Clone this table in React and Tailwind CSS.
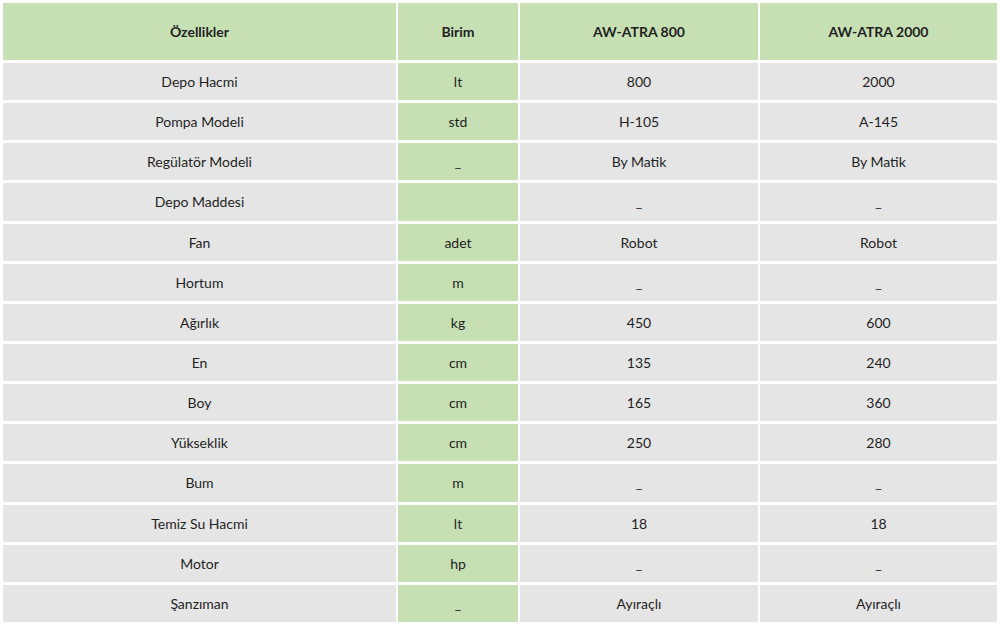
import React from "react";

const rows = [
  ["Depo Hacmi", "lt", "800", "2000"],
  ["Pompa Modeli", "std", "H-105", "A-145"],
  ["Regülatör Modeli", "_", "By Matik", "By Matik"],
  ["Depo Maddesi", "", "_", "_"],
  ["Fan", "adet", "Robot", "Robot"],
  ["Hortum", "m", "_", "_"],
  ["Ağırlık", "kg", "450", "600"],
  ["En", "cm", "135", "240"],
  ["Boy", "cm", "165", "360"],
  ["Yükseklik", "cm", "250", "280"],
  ["Bum", "m", "_", "_"],
  ["Temiz Su Hacmi", "lt", "18", "18"],
  ["Motor", "hp", "_", "_"],
  ["Şanzıman", "_", "Ayıraçlı", "Ayıraçlı"],
];

export default function App() {
  return (
    <div
      className="w-[1000px] h-[625px] bg-white p-[3px] text-[14px] text-[#1f1f1f]"
      style={{ fontFamily: "Lato, 'Open Sans', sans-serif" }}
    >
      <div className="grid h-full grid-cols-[393px_120px_238px_237px] grid-rows-[57px_repeat(14,1fr)] gap-x-[2px] gap-y-[3px]">
        {["Özellikler", "Birim", "AW-ATRA 800", "AW-ATRA 2000"].map((h) => (
          <div
            key={h}
            className="flex items-center justify-center bg-[#c6e0b4] font-bold"
          >
            {h}
          </div>
        ))}
        {rows.map((r, i) => (
          <React.Fragment key={i}>
            <div className="flex items-center justify-center bg-[#e5e5e5]">{r[0]}</div>
            <div className="flex items-center justify-center bg-[#c6e0b4]">{r[1]}</div>
            <div className="flex items-center justify-center bg-[#e5e5e5]">{r[2]}</div>
            <div className="flex items-center justify-center bg-[#e5e5e5]">{r[3]}</div>
          </React.Fragment>
        ))}
      </div>
    </div>
  );
}
